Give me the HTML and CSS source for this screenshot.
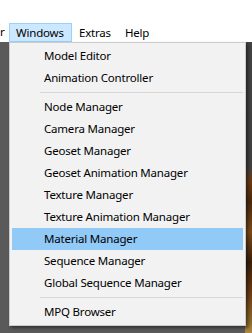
FILE: index.html
```html
<!DOCTYPE html>
<html>
<head>
<meta charset="utf-8">
<link rel="stylesheet" href="styles.css">
</head>
<body>
<div class="app">
  <div class="topbar">
    <div class="menubar">
      <div class="mitem edge">r</div>
      <div class="mitem active">Windows</div>
      <div class="mitem">Extras</div>
      <div class="mitem">Help</div>
    </div>
  </div>
  <div class="workspace">
    <div class="model"></div>
  </div>
  <div class="dropdown">
    <div class="item">Model Editor</div>
    <div class="item">Animation Controller</div>
    <div class="sep"></div>
    <div class="item">Node Manager</div>
    <div class="item">Camera Manager</div>
    <div class="item">Geoset Manager</div>
    <div class="item">Geoset Animation Manager</div>
    <div class="item">Texture Manager</div>
    <div class="item">Texture Animation Manager</div>
    <div class="item hl">Material Manager</div>
    <div class="item">Sequence Manager</div>
    <div class="item">Global Sequence Manager</div>
    <div class="sep"></div>
    <div class="item">MPQ Browser</div>
  </div>
</div>
</body>
</html>
```
FILE: styles.css
```css
html, body {
  margin: 0;
  padding: 0;
}
body {
  width: 252px;
  height: 333px;
  overflow: hidden;
  font-family: "Noto Sans", "Open Sans", sans-serif;
  font-size: 11.5px;
  letter-spacing: -0.2px;
  color: #000;
}
.app {
  position: relative;
  width: 252px;
  height: 333px;
  display: flex;
  flex-direction: column;
}
.topbar {
  height: 42px;
  background: #ffffff;
  display: flex;
  flex-direction: column;
  justify-content: flex-end;
}
.menubar {
  height: 20px;
  display: flex;
  align-items: stretch;
}
.mitem {
  padding: 0 6px;
  line-height: 17px;
  border: 1px solid transparent;
  box-sizing: border-box;
  height: 19px;
  margin-top: 1px;
  white-space: nowrap;
}
.mitem.edge {
  width: 9px;
  padding: 0;
  border: none;
}
.mitem.active {
  width: 63px;
  padding: 0 0 0 6px;
  background: #cce8ff;
  border-color: #99d1ff;
}
.workspace {
  flex: 1;
  background: #5a5a5a;
  position: relative;
  display: flex;
  justify-content: flex-end;
}
.model {
  width: 7px;
  background:
    linear-gradient(180deg, #434343 0px, #404040 125px, #6b3a12 140px, #4a2a10 160px, #7a4a18 190px, #3a200c 220px, #6a3a14 250px, #8a6a2a 280px, #b08a40 291px);
}
.dropdown {
  position: absolute;
  left: 9px;
  top: 42px;
  width: 237px;
  box-sizing: border-box;
  background: #f2f2f2;
  border: 1px solid #cccccc;
  padding: 2px;
  box-shadow: 2px 2px 3px rgba(0, 0, 0, 0.45);
}
.item {
  height: 22px;
  line-height: 22px;
  padding-left: 32px;
  white-space: nowrap;
}
.item.hl {
  background: #91c9f7;
}
.sep {
  height: 1px;
  background: #d7d7d7;
  margin: 3px 0 3px 28px;
}
```
